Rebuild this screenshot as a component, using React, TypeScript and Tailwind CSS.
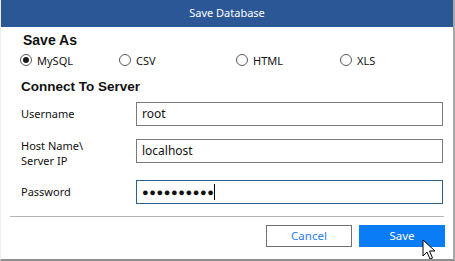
import { useState } from 'react';

const formats = [
  { label: 'MySQL', width: 'w-[99px]' },
  { label: 'CSV', width: 'w-[117px]' },
  { label: 'HTML', width: 'w-[104px]' },
  { label: 'XLS', width: 'w-[60px]' },
];

function Radio({ checked }: { checked: boolean }) {
  return (
    <span className="w-[12px] h-[12px] rounded-full border border-[#5a5a5a] bg-white flex items-center justify-center shrink-0">
      {checked && <span className="w-[6px] h-[6px] rounded-full bg-[#1a1a1a]" />}
    </span>
  );
}

export default function App() {
  const [format] = useState('MySQL');

  return (
    <div
      className="relative w-[455px] h-[261px] bg-white border-l border-[#ececec] border-r-2 border-r-[#a8a8a8] border-b-2 border-b-[#8f8f8f] overflow-hidden text-[#111]"
      style={{ fontFamily: '"Noto Sans", "Open Sans", sans-serif' }}
    >
      {/* Title bar */}
      <div className="h-[27px] bg-[#2b5797] flex items-center justify-center text-white text-[11px]">
        Save Database
      </div>

      <div className="pl-[19px] pr-[9px]">
        <div className="h-[16px] mt-[5px] pl-[3px] flex items-center font-['Liberation_Sans',sans-serif] font-bold text-[14px]">
          Save As
        </div>

        {/* Format radios */}
        <div className="h-[16px] mt-[4px] flex items-center text-[11px]">
          {formats.map((f) => (
            <label key={f.label} className={`${f.width} flex items-center gap-[5px]`}>
              <Radio checked={format === f.label} />
              <span className="leading-none">{f.label}</span>
            </label>
          ))}
        </div>

        <div className="h-[16px] mt-[11px] pl-[1px] flex items-center font-['Liberation_Sans',sans-serif] font-bold text-[13.5px]">
          Connect To Server
        </div>

        {/* Fields */}
        <div className="mt-[7px] flex flex-col gap-[13px] text-[11px]">
          <div className="h-[24px] flex items-center pl-[1px]">
            <span className="w-[115px]">Username</span>
            <div className="w-[307px] h-[24px] border border-[#7a7a7a] flex items-center px-[5px] text-[12px]">root</div>
          </div>
          <div className="h-[24px] flex items-start pl-[1px]">
            <div className="w-[115px] -mt-[1px] flex flex-col leading-[15px]">
              <span>Host Name\</span>
              <span>Server IP</span>
            </div>
            <div className="w-[307px] h-[24px] border border-[#7a7a7a] flex items-center px-[5px] text-[12px]">localhost</div>
          </div>
          <div className="h-[24px] flex items-center pl-[1px] mt-[4px]">
            <span className="w-[115px]">Password</span>
            <div className="w-[307px] h-[24px] border border-[#2a5f8f] flex items-center px-[5px]">
              <span className="text-[11px] tracking-[0.6px] font-bold">●●●●●●●●●●</span>
              <span className="w-px h-[16px] bg-black" />
            </div>
          </div>
        </div>
      </div>

      {/* Divider */}
      <div className="mx-[9px] mt-[12px] w-[434px] h-px bg-[#b4b4b4]" />

      {/* Buttons */}
      <div className="mt-[8px] flex justify-end gap-[7px] pr-[8px] text-[11.5px]">
        <button className="w-[86px] h-[22px] border border-[#707070] bg-white text-[#2b7de9]">Cancel</button>
        <button className="w-[86px] h-[22px] bg-[#0a7cf5] text-white">Save</button>
      </div>

      {/* Mouse cursor */}
      <svg className="absolute left-[421px] top-[239px]" width="14" height="22" viewBox="0 0 14 22">
        <path
          d="M1 1 L1 17 L5 13 L8 20 L10.5 19 L7.5 12 L13 12 Z"
          fill="#fff"
          stroke="#000"
          strokeWidth="1"
          strokeLinejoin="miter"
        />
      </svg>
    </div>
  );
}
